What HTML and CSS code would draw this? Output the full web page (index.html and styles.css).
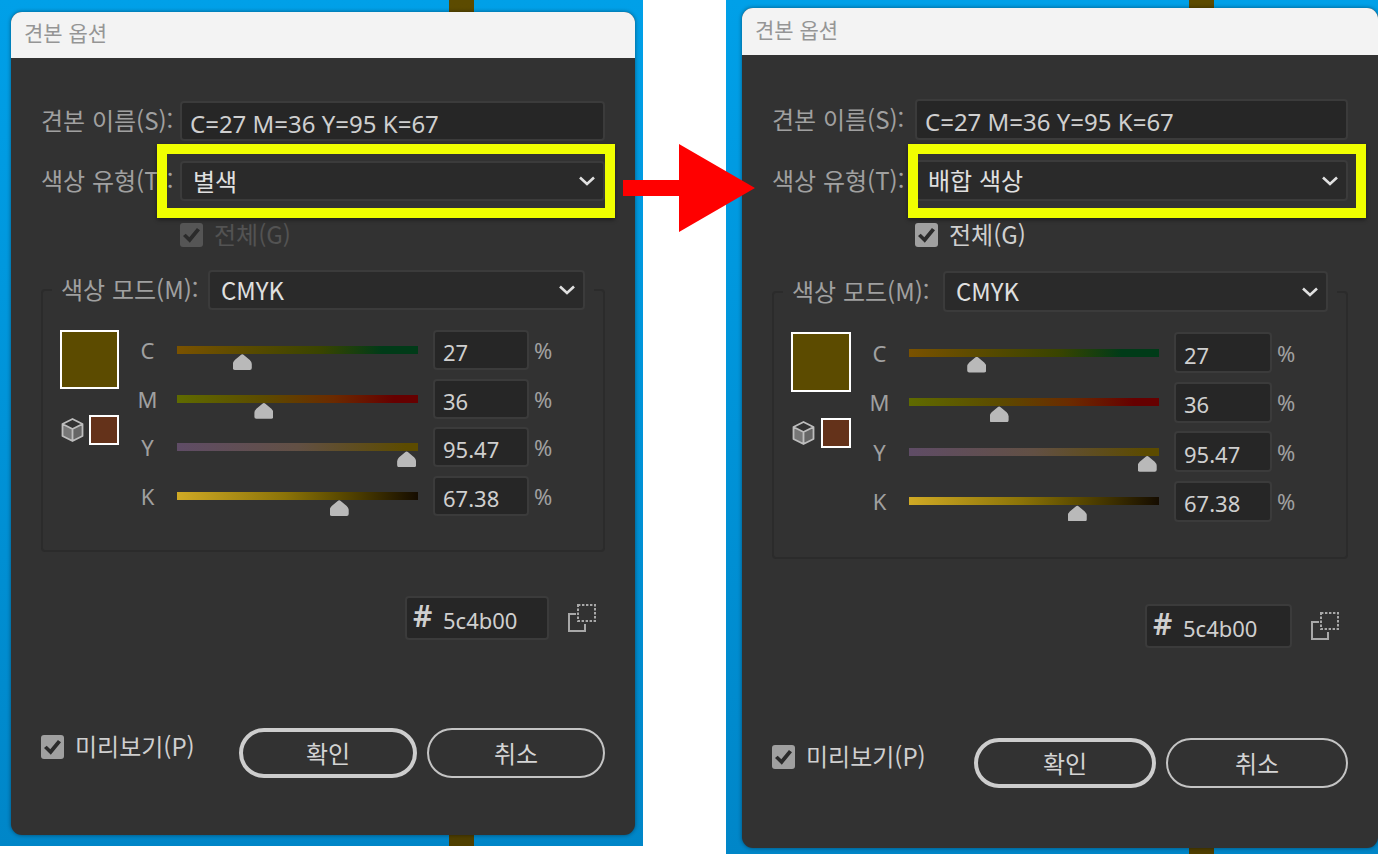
FILE: index.html
```html
<!DOCTYPE html>
<html lang="ko">
<head>
    <meta charset="UTF-8">
    <meta name="viewport" content="width=device-width, initial-scale=1">
    <title>견본 옵션</title>
    <link rel="stylesheet" href="styles.css">
</head>
<body>

<svg class="sprites" aria-hidden="true">
    <symbol id="chevron" viewBox="0 0 18 12">
        <path d="M2 2.5 L9 9 L16 2.5" fill="none" stroke="currentColor" stroke-width="2.6"/>
    </symbol>
    <symbol id="cube" viewBox="0 0 24 26">
        <path d="M2 7.5 L12 12 V24 L2 19 Z" fill="#777"/>
        <path d="M22 7.5 L12 12 V24 L22 19 Z" fill="#666"/>
        <path d="M12 2 L22 7 V19 L12 24 L2 19 V7 Z M2 7 L12 12 L22 7 M12 12 V24" fill="none" stroke="#bdbdbd" stroke-width="1.8" stroke-linejoin="round"/>
    </symbol>
    <symbol id="swap" viewBox="0 0 30 30">
        <path d="M9 11 H2 V28 H18 V21" fill="none" stroke="#a8a8a8" stroke-width="2"/>
        <path d="M11 2 H28 V18 H11 Z" fill="none" stroke="#a8a8a8" stroke-width="2" stroke-dasharray="2.4 1.6"/>
    </symbol>
</svg>

<main class="compare">
    <section class="panel">
        <form class="dialog">
            <h1 class="title">견본 옵션</h1>
            <div class="content">
                <div class="row">
                    <label for="name1">견본 이름(S):</label>
                    <input class="field name" type="text" id="name1" value="C=27 M=36 Y=95 K=67">
                </div>
                <div class="row type">
                    <label for="type1">색상 유형(T):</label>
                    <div class="select">
                        <select id="type1">
                            <option>별색</option>
                            <option>배합 색상</option>
                        </select>
                        <svg class="chevron"><use href="#chevron"/></svg>
                    </div>
                    <div class="highlight"></div>
                </div>
                <div class="check global disabled">
                    <input type="checkbox" id="global1" checked disabled>
                    <label for="global1">전체(G)</label>
                </div>

                <fieldset class="mode">
                    <legend>
                        <label for="mode1">색상 모드(M):</label>
                        <div class="select">
                            <select id="mode1">
                                <option>CMYK</option>
                                <option>RGB</option>
                            </select>
                            <svg class="chevron"><use href="#chevron"/></svg>
                        </div>
                    </legend>
                    <div class="mixer">
                        <div class="swatches">
                            <div class="swatch"></div>
                            <div class="gamut">
                                <svg class="cube"><use href="#cube"/></svg>
                                <div class="swatch-small"></div>
                            </div>
                        </div>
                        <div class="channels">
                            <div class="channel">
                                <label for="c1">C</label>
                                <input type="range" class="slider cyan" aria-label="C" min="0" max="100" step="0.01" value="27">
                                <input class="field" type="text" id="c1" value="27">
                                <span>%</span>
                            </div>
                            <div class="channel">
                                <label for="m1">M</label>
                                <input type="range" class="slider magenta" aria-label="M" min="0" max="100" step="0.01" value="36">
                                <input class="field" type="text" id="m1" value="36">
                                <span>%</span>
                            </div>
                            <div class="channel">
                                <label for="y1">Y</label>
                                <input type="range" class="slider yellow" aria-label="Y" min="0" max="100" step="0.01" value="95.47">
                                <input class="field" type="text" id="y1" value="95.47">
                                <span>%</span>
                            </div>
                            <div class="channel">
                                <label for="k1">K</label>
                                <input type="range" class="slider black" aria-label="K" min="0" max="100" step="0.01" value="67.38">
                                <input class="field" type="text" id="k1" value="67.38">
                                <span>%</span>
                            </div>
                        </div>
                    </div>
                </fieldset>

                <div class="hex-row">
                    <div class="hex">
                        <label for="hex1">#</label>
                        <input type="text" id="hex1" value="5c4b00">
                    </div>
                    <svg class="swap"><use href="#swap"/></svg>
                </div>

                <div class="footer">
                    <div class="check">
                        <input type="checkbox" id="preview1" checked>
                        <label for="preview1">미리보기(P)</label>
                    </div>
                    <div class="buttons">
                        <button type="button" class="primary">확인</button>
                        <button type="button">취소</button>
                    </div>
                </div>
            </div>
        </form>
    </section>

    <section class="panel after">
        <form class="dialog">
            <h1 class="title">견본 옵션</h1>
            <div class="content">
                <div class="row">
                    <label for="name2">견본 이름(S):</label>
                    <input class="field name" type="text" id="name2" value="C=27 M=36 Y=95 K=67">
                </div>
                <div class="row type">
                    <label for="type2">색상 유형(T):</label>
                    <div class="select">
                        <select id="type2">
                            <option>배합 색상</option>
                            <option>별색</option>
                        </select>
                        <svg class="chevron"><use href="#chevron"/></svg>
                    </div>
                    <div class="highlight"></div>
                </div>
                <div class="check global">
                    <input type="checkbox" id="global2" checked>
                    <label for="global2">전체(G)</label>
                </div>

                <fieldset class="mode">
                    <legend>
                        <label for="mode2">색상 모드(M):</label>
                        <div class="select">
                            <select id="mode2">
                                <option>CMYK</option>
                                <option>RGB</option>
                            </select>
                            <svg class="chevron"><use href="#chevron"/></svg>
                        </div>
                    </legend>
                    <div class="mixer">
                        <div class="swatches">
                            <div class="swatch"></div>
                            <div class="gamut">
                                <svg class="cube"><use href="#cube"/></svg>
                                <div class="swatch-small"></div>
                            </div>
                        </div>
                        <div class="channels">
                            <div class="channel">
                                <label for="c2">C</label>
                                <input type="range" class="slider cyan" aria-label="C" min="0" max="100" step="0.01" value="27">
                                <input class="field" type="text" id="c2" value="27">
                                <span>%</span>
                            </div>
                            <div class="channel">
                                <label for="m2">M</label>
                                <input type="range" class="slider magenta" aria-label="M" min="0" max="100" step="0.01" value="36">
                                <input class="field" type="text" id="m2" value="36">
                                <span>%</span>
                            </div>
                            <div class="channel">
                                <label for="y2">Y</label>
                                <input type="range" class="slider yellow" aria-label="Y" min="0" max="100" step="0.01" value="95.47">
                                <input class="field" type="text" id="y2" value="95.47">
                                <span>%</span>
                            </div>
                            <div class="channel">
                                <label for="k2">K</label>
                                <input type="range" class="slider black" aria-label="K" min="0" max="100" step="0.01" value="67.38">
                                <input class="field" type="text" id="k2" value="67.38">
                                <span>%</span>
                            </div>
                        </div>
                    </div>
                </fieldset>

                <div class="hex-row">
                    <div class="hex">
                        <label for="hex2">#</label>
                        <input type="text" id="hex2" value="5c4b00">
                    </div>
                    <svg class="swap"><use href="#swap"/></svg>
                </div>

                <div class="footer">
                    <div class="check">
                        <input type="checkbox" id="preview2" checked>
                        <label for="preview2">미리보기(P)</label>
                    </div>
                    <div class="buttons">
                        <button type="button" class="primary">확인</button>
                        <button type="button">취소</button>
                    </div>
                </div>
            </div>
        </form>
        <svg class="arrow" viewBox="0 0 132 88" aria-hidden="true">
            <path d="M0 36 H56 V0 L132 44 L56 88 V52 H0 Z" fill="#ff0000"/>
        </svg>
    </section>
</main>

</body>
</html>
```

FILE: styles.css
```css
* {
    box-sizing: border-box;
}
body {
    margin: 0;
    background: #fff;
    font-family: "Noto Sans CJK KR", "Noto Sans", sans-serif;
    color: #a0a0a0;
}
input, select, button {
    font-family: inherit;
    margin: 0;
}
.sprites {
    display: none;
}
.compare {
    display: grid;
    grid-template-columns: 643fr 652fr;
    column-gap: 83px;
    align-items: start;
}

/* blue desktop with the brown strip that runs behind the dialog */
.panel {
    --text: 24px;
    --value: 22px;
    --label: 139px;
    --legend: 147px;
    --field: 40px;
    --swatch: 59px;
    --mixer: 186px;
    --number: 96px;
    --hex: 144px;
    --button: 178px;
    position: relative;
    padding: 12px 8px 11px 11px;
    background:
        linear-gradient(#5c4b00, #4f3f00) 449px 0 / 25px 100% no-repeat,
        linear-gradient(#00a0e8, #0086c8);
}
.panel.after {
    --label: 143px;
    --legend: 151px;
    --field: 41px;
    --swatch: 60px;
    --mixer: 190px;
    --number: 98px;
    --hex: 147px;
    --button: 182px;
    padding: 8px 0 6px 16px;
    background-position: 463px 0, 0 0;
}
.dialog {
    border-radius: 11px;
    background: #323232;
    box-shadow: 0 0 4px rgba(0, 0, 0, 0.45);
    overflow: hidden;
}
.title {
    margin: 0;
    padding: 0 13px 5px;
    background: #f3f3f3;
    color: #959595;
    font-size: 21px;
    font-weight: 400;
    line-height: 41px;
}
.after .title {
    line-height: 42px;
}
.content {
    padding: 43px 30px 57px;
    font-size: var(--text);
    line-height: 30px;
}
.after .content {
    padding-top: 44px;
    padding-bottom: 60px;
}

.row {
    display: flex;
    align-items: center;
}
.row > label {
    width: var(--label);
    flex: none;
    padding-bottom: 2px;
    white-space: nowrap;
}
.type {
    position: relative;
    margin-top: 20px;
}
.field, .select select, .hex {
    height: var(--field);
    border: 2px solid #3b3b3b;
    border-radius: 4px;
    background: #262626;
    color: #cfcfcf;
}
.field {
    flex: 1;
    min-width: 0;
    padding: 4px 8px 0;
    font-family: "Noto Sans", "Noto Sans CJK KR", sans-serif;
    font-size: var(--value);
    outline: none;
}
.name {
    font-size: var(--text);
}
.select {
    position: relative;
    flex: 1;
}
.select select {
    display: block;
    width: 100%;
    padding: 0 36px 2px 11px;
    appearance: none;
    background: #2a2a2a;
    color: #e0e0e0;
    font-size: var(--text);
}
.chevron {
    position: absolute;
    right: 9px;
    top: 50%;
    width: 18px;
    height: 12px;
    margin-top: -6px;
    color: #e0e0e0;
    pointer-events: none;
}
.highlight {
    position: absolute;
    inset: -17px -10px -17px 116px;
    border: 10px solid #f0ff00;
    box-shadow: 0 2px 4px rgba(0, 0, 0, 0.4);
    pointer-events: none;
}
.after .highlight {
    inset: -16px -18px -17px 136px;
}
.arrow {
    position: absolute;
    left: -103px;
    top: 144px;
    width: 132px;
    height: 88px;
}

.check {
    display: flex;
    align-items: center;
    gap: 11px;
    height: 24px;
    color: #cfcfcf;
    white-space: nowrap;
}
.check label {
    padding-bottom: 2px;
}
.check input {
    position: relative;
    width: 23px;
    height: 24px;
    flex: none;
    appearance: none;
    border-radius: 3px;
    background: #a0a0a0;
}
.check input::after {
    content: "";
    position: absolute;
    inset: 4px 3px;
    background: #2b2b2b;
    clip-path: polygon(0 56%, 16% 42%, 37% 64%, 82% 6%, 100% 20%, 40% 98%);
}
.global {
    margin: 22px 0 23px var(--label);
}
.after .global {
    margin-bottom: 24px;
}
.disabled {
    color: #535353;
}
.disabled input {
    background: #555;
}

.mode {
    margin: 0;
    padding: 20px 54px 34px 17px;
    border: 2px solid #2b2b2b;
    border-radius: 4px;
    min-width: 0;
}
.after .mode {
    padding-bottom: 35px;
}
.mode legend {
    display: flex;
    align-items: center;
    width: calc(100% + 53px);
    margin-left: -8px;
    padding: 0 9px;
}
.mode legend label {
    width: var(--legend);
    padding-bottom: 2px;
    white-space: nowrap;
}
.mixer {
    display: flex;
    gap: 20px;
    height: var(--mixer);
}
.swatch {
    width: var(--swatch);
    height: var(--swatch);
    border: 2px solid #fff;
    background: #5c4b00;
}
.gamut {
    display: flex;
    align-items: center;
    justify-content: space-between;
    margin-top: 26px;
}
.cube {
    width: 25px;
    height: 26px;
}
.swatch-small {
    width: 30px;
    height: 30px;
    border: 2px solid #fff;
    background: #64321a;
}
.channels {
    flex: 1;
    display: flex;
    flex-direction: column;
    justify-content: space-between;
}
.channel {
    display: grid;
    grid-template-columns: 17px 1fr var(--number) 20px;
    align-items: center;
    font-family: "Noto Sans", "Noto Sans CJK KR", sans-serif;
    font-size: var(--value);
}
.channel label {
    justify-self: center;
}
.channel span {
    margin-left: 5px;
}

/* the thumb travels exactly from one end of the track to the other */
.slider {
    width: calc(100% - 18px);
    height: var(--field);
    margin-left: 12px;
    appearance: none;
    background: none;
}
.slider::-webkit-slider-runnable-track {
    height: 40px;
    background: var(--ramp) center / calc(100% - 18px) 8px no-repeat;
}
.slider::-webkit-slider-thumb {
    appearance: none;
    width: 19px;
    height: 16px;
    margin-top: 24px;
    background: #b9b9b9;
    clip-path: path("M8 1 Q9.5 -0.5 11 1 L17 6 Q19 8 19 10 V14 Q19 16 17 16 H2 Q0 16 0 14 V10 Q0 8 2 6 Z");
}
.cyan {
    --ramp: linear-gradient(90deg, #7a5200, #5c4b00 27%, #394400 60%, #003b18 85%);
}
.magenta {
    --ramp: linear-gradient(90deg, #5f6b00, #5c4b00 36%, #6b2a00 65%, #600 90%);
}
.yellow {
    --ramp: linear-gradient(90deg, #5f4c66, #625044 50%, #5c4b00 95%);
}
.black {
    --ramp: linear-gradient(90deg, #d0aa25, #8b7308 45%, #5c4b00 67%, #150c00);
}

.hex-row {
    display: flex;
    justify-content: flex-end;
    align-items: center;
    gap: 18px;
    margin-top: 44px;
    padding-right: 8px;
}
.after .hex-row {
    margin-top: 45px;
}
.hex {
    display: flex;
    align-items: center;
    width: var(--hex);
    height: 44px;
    padding-left: 6px;
}
.hex label {
    width: 30px;
    padding-bottom: 4px;
    font-family: "Noto Sans", sans-serif;
    font-size: 30px;
    font-weight: 600;
}
.hex input {
    width: 90px;
    padding: 4px 0 0;
    border: 0;
    outline: none;
    background: none;
    color: #cfcfcf;
    font-family: "Noto Sans", sans-serif;
    font-size: var(--value);
}
.swap {
    width: 30px;
    height: 30px;
}

.footer {
    display: flex;
    justify-content: space-between;
    margin-top: 88px;
}
.after .footer {
    margin-top: 90px;
}
.footer .check {
    margin-top: 7px;
}
.buttons {
    display: flex;
    gap: 10px;
}
.buttons button {
    width: var(--button);
    height: 50px;
    padding: 0 0 2px;
    border: 2px solid #c4c4c4;
    border-radius: 25px;
    background: none;
    color: #d4d4d4;
    font-size: var(--text);
}
.buttons .primary {
    border: 4px solid #cdcdcd;
}
```
